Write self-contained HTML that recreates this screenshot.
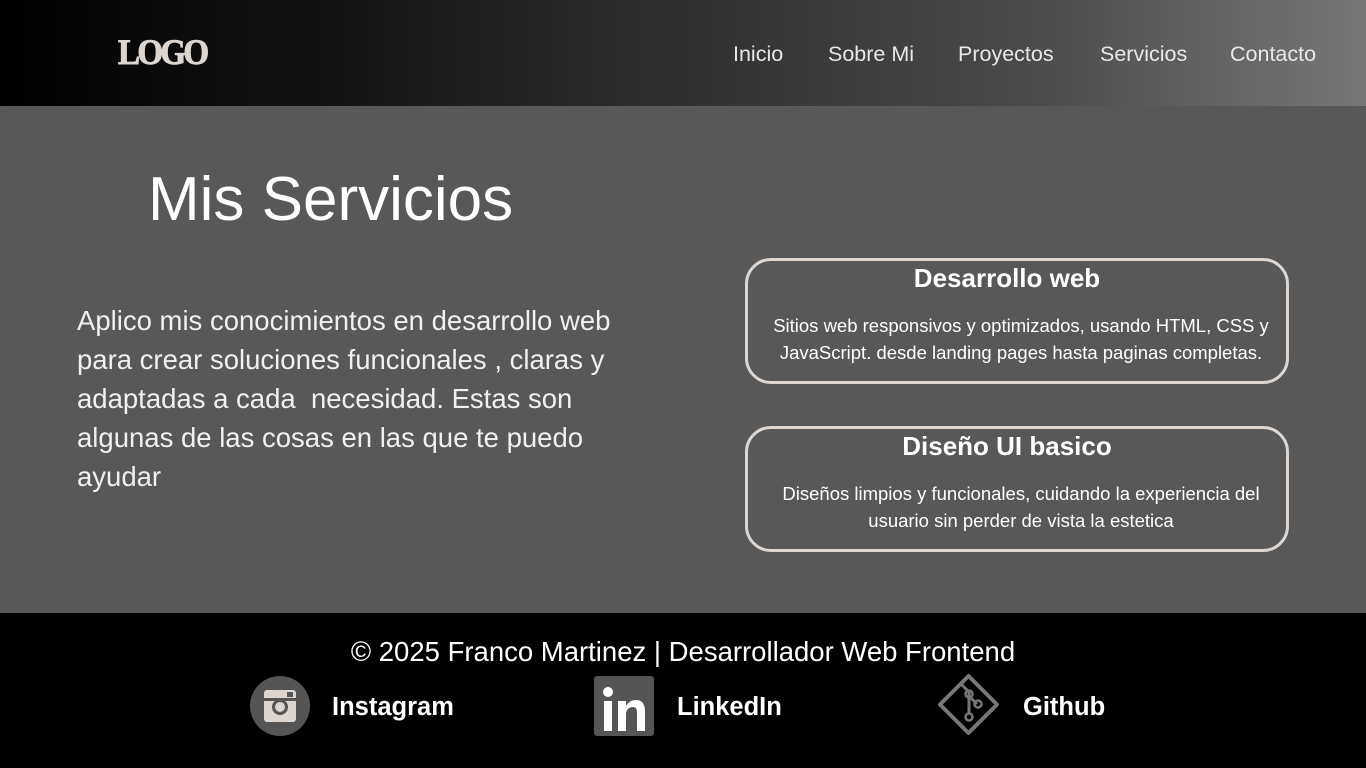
<!DOCTYPE html>
<html><head><meta charset="utf-8"><style>
*{margin:0;padding:0;box-sizing:border-box}
body{width:1366px;height:768px;overflow:hidden;font-family:"Liberation Sans",sans-serif;background:#585858;position:relative}
header{position:absolute;left:0;top:0;width:1366px;height:106px;background:linear-gradient(90deg,#000 0%,#141414 25%,#303030 50%,#4a4a4a 75%,#777 100%)}
.logo{position:absolute;left:118px;top:34px;font-family:"Liberation Serif",serif;font-weight:900;font-size:36px;color:#ddd6d0;letter-spacing:-3px;line-height:36px;transform:scaleX(0.92);transform-origin:left;-webkit-text-stroke:1px #ddd6d0}
nav a{position:absolute;top:42px;font-size:21.5px;color:#e8e8e8;text-decoration:none}
h1{position:absolute;left:148px;top:164px;font-size:62px;font-weight:normal;color:#fff}
.intro{position:absolute;left:77px;top:301px;width:580px;font-size:27.5px;line-height:39px;color:#f0f0f0}
.card{position:absolute;left:745px;width:544px;height:126px;border:3px solid #ddd6d0;border-radius:26px;text-align:center;color:#fff}
.card h3{font-size:26px;margin-top:2px;margin-left:-20px}
.card p{font-size:18.5px;line-height:27px;margin-top:18px;white-space:nowrap;margin-left:8px}
footer{position:absolute;left:0;top:613px;width:1366px;height:155px;background:#000;color:#fff}
.copy{position:absolute;top:23px;width:100%;text-align:center;font-size:27.5px;left:0}
.s{position:absolute;top:80px;font-size:25.5px;font-weight:bold}
</style></head><body>
<header><div class="logo">LOGO</div>
<nav><a style="left:733px">Inicio</a><a style="left:828px">Sobre Mi</a><a style="left:958px">Proyectos</a><a style="left:1100px">Servicios</a><a style="left:1230px">Contacto</a></nav></header>
<h1>Mis Servicios</h1>
<div class="intro">Aplico mis conocimientos en desarrollo web para crear soluciones funcionales , claras y adaptadas a cada &nbsp;necesidad. Estas son algunas de las cosas en las que te puedo ayudar</div>
<div class="card" style="top:258px"><h3>Desarrollo web</h3><p>Sitios web responsivos y optimizados, usando HTML, CSS y<br>JavaScript. desde landing pages hasta paginas completas.</p></div>
<div class="card" style="top:426px"><h3>Diseño UI basico</h3><p>Diseños limpios y funcionales, cuidando la experiencia del<br>usuario sin perder de vista la estetica</p></div>
<footer><div class="copy">© 2025 Franco Martinez | Desarrollador Web Frontend</div>
<svg style="position:absolute;left:249px;top:62px" width="62" height="62"><circle cx="31" cy="31" r="30" fill="#555"/><rect x="15" y="15" width="32" height="32" rx="3" fill="#ddd6d0"/><rect x="15" y="23" width="32" height="3" fill="#555"/><circle cx="31" cy="32" r="8" fill="#555"/><circle cx="31" cy="32" r="5" fill="#ddd6d0"/><rect x="38" y="17" width="6" height="5" fill="#555"/></svg>
<div class="s" style="left:332px">Instagram</div>
<svg style="position:absolute;left:594px;top:63px" width="60" height="60"><rect width="60" height="60" rx="3" fill="#555"/><rect x="10" y="25" width="8" height="30" fill="#fff"/><circle cx="14" cy="16" r="5" fill="#fff"/><path d="M24 25h8v5c2-4 6-6 10-6 6 0 9 4 9 11v20h-8V37c0-4-1-6-4-6s-7 2-7 7v17h-8z" fill="#fff"/></svg>
<div class="s" style="left:677px">LinkedIn</div>
<svg style="position:absolute;left:937px;top:60px" width="63" height="63"><path d="M31.5 3L60 31.5 31.5 60 3 31.5z" fill="none" stroke="#777" stroke-width="4" stroke-linejoin="round"/><path d="M25 12l7 7v22M32 23l8 8" stroke="#777" stroke-width="3" fill="none"/><circle cx="32" cy="21" r="3.5" fill="none" stroke="#777" stroke-width="2.5"/><circle cx="41" cy="31" r="3.5" fill="none" stroke="#777" stroke-width="2.5"/><circle cx="32" cy="44" r="3.5" fill="none" stroke="#777" stroke-width="2.5"/></svg>
<div class="s" style="left:1023px">Github</div>
</footer>
</body></html>
